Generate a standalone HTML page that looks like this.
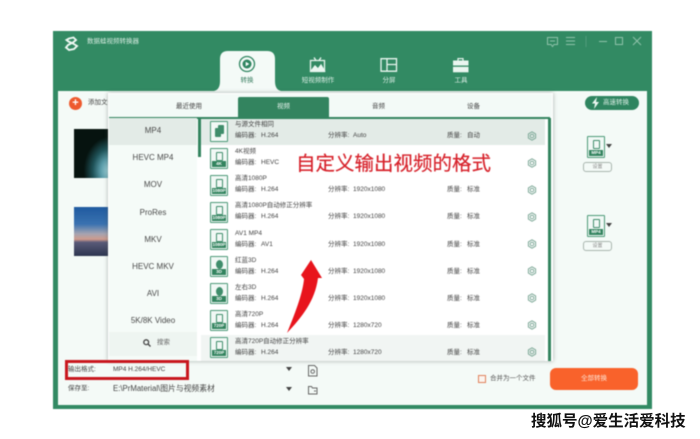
<!DOCTYPE html>
<html lang="zh"><head><meta charset="utf-8"><title>视频转换器</title>
<style>
*{box-sizing:border-box}
html,body{margin:0;padding:0;width:700px;height:439px;overflow:hidden;background:#fff;font-family:"Liberation Sans","Noto Sans CJK SC",sans-serif}
.a{position:absolute;white-space:nowrap}
#app{position:absolute;left:0;top:0;width:700px;height:439px;filter:blur(.4px)}
.fi{position:absolute;left:210px;width:18px;height:21px;border:1px solid #4c9a78;border-radius:1px;background:#f1f8f5}
.fi i{position:absolute;left:5px;top:2.500px;width:7px;height:9px;border:1px solid #3f8d6b;border-radius:1px}
.fi b{position:absolute;left:1px;right:1px;bottom:1px;height:6px;background:#33845f;color:#fff;font:bold 4.500px/6px "Liberation Sans",sans-serif;text-align:center}
.li{position:absolute;left:109px;width:88px;text-align:center;font-size:8px;line-height:12px;color:#4a4a4a}
.lb{position:absolute;color:#444;font-size:6.500px;line-height:8px;white-space:nowrap;margin-top:1px}
</style></head><body>
<div id="app">
<div class="a" style="left:53px;top:31px;width:599px;height:378px;background:#328a63"></div>
<div class="a" style="left:58px;top:91px;width:589px;height:314px;background:#f4faf7"></div>

<svg class="a" style="left:64px;top:36px" width="15" height="15" viewBox="0 0 15 15" fill="none" stroke="#eef8f3" stroke-width="1.900"><path d="M5 2.500 9.500 1.500 12 4 9 6.500 4 9 2 11.500 5 14 10 13 13 10 9 7.500 4.500 5.500 2.500 4z"/></svg>
<div class="a" style="left:87px;top:37px;font-size:6.500px;line-height:9px;color:#d6ebe0">数据蛙视频转换器</div>

<!-- window controls -->
<svg class="a" style="left:545px;top:35px" width="100" height="14" fill="none" stroke="#8fc2aa" stroke-width="1"><path d="M2.500 2.500h10v7h-3.500l-1.500 2-1.500-2h-3.500zM5 6h5M21 2.500h9M21 6h9M21 9.500h9"/><path d="M41 1v11" stroke="#4f9c7b"/><path d="M54 6.500h8M70.500 2.500h7v7h-7zM88 2l8 8M96 2l-8 8"/></svg>

<!-- main tabs -->
<svg class="a" style="left:214px;top:51px" width="67" height="40"><path d="M0 40C4 39 6 36 6 30V8Q6 0 14 0H53Q61 0 61 8V30C61 36 63 39 67 40z" fill="#f4faf7"/></svg>
<svg class="a" style="left:238px;top:55px" width="18" height="18" fill="none" stroke="#2f8560" stroke-width="1.300"><circle cx="9" cy="9" r="7.500"/><circle cx="9" cy="9" r="4.500" fill="#2f8560" stroke="none"/><path d="M7.700 6.800 11.300 9 7.700 11.200z" fill="#fff" stroke="none"/></svg>
<div class="a" style="left:237px;top:77px;width:20px;text-align:center;font-size:6.500px;line-height:8px;color:#3b7f62">转换</div>
<svg class="a" style="left:309px;top:57px" width="18" height="16" fill="none" stroke="#eaf6f0" stroke-width="1.300"><path d="M1.500 3.500h14v11h-14zM5 .5l2 3M12 .5l-2 3"/><path d="M2 14l4-5 3 3 3-4 3.500 6z" fill="#eaf6f0"/></svg>
<div class="a" style="left:297px;top:77px;width:42px;text-align:center;font-size:6.500px;line-height:8px;color:#dcefe6">短视频制作</div>
<svg class="a" style="left:380px;top:58px" width="18" height="14" fill="none" stroke="#eaf6f0" stroke-width="1.300"><path d="M1 .7h15.500v12.500h-15.500zM7 .7v12.500M7 6.500h9.500"/></svg>
<div class="a" style="left:379px;top:77px;width:20px;text-align:center;font-size:6.500px;line-height:8px;color:#dcefe6">分屏</div>
<svg class="a" style="left:452px;top:58px" width="18" height="15"><path d="M6 2.500v-2h5v2" fill="none" stroke="#eaf6f0" stroke-width="1.200"/><rect x="1" y="2.500" width="15.500" height="5" fill="#eaf6f0"/><rect x="1" y="8.800" width="15.500" height="5.500" fill="#eaf6f0"/></svg>
<div class="a" style="left:449px;top:77px;width:24px;text-align:center;font-size:6.500px;line-height:8px;color:#dcefe6">工具</div>

<!-- behind popup -->
<div class="a" style="left:69px;top:97px;width:13px;height:13px;border-radius:50%;background:#ee5a2e;color:#fff;font:bold 11px/12px 'Liberation Sans';text-align:center">+</div>
<div class="a" style="left:88px;top:99px;font-size:6.500px;line-height:8px;color:#444">添加文件</div>
<div class="a" style="left:74px;top:129px;width:34px;height:49px;background:radial-gradient(ellipse 26px 34px at 105% 85%,#a8d8df 0,#5a9ba8 35%,#1f5258 65%,rgba(6,20,18,0) 100%),#06130f"></div>
<div class="a" style="left:74px;top:207px;width:34px;height:49px;background:linear-gradient(#1f5aa0 0,#3a72b0 35%,#a7a4b0 55%,#cf9a8c 66%,#5a5a78 72%,#2c3550 100%)"></div>

<div class="a" style="left:585px;top:96px;width:54px;height:14px;border-radius:7px;background:#2f8560"></div>
<svg class="a" style="left:591px;top:97px" width="9" height="12"><path d="M6 0 1 6.500h3L3 12l5-7H5z" fill="#eef8f3"/></svg>
<div class="a" style="left:603px;top:99px;font-size:6.500px;line-height:8px;color:#d8ede3">高速转换</div>

<div class="fi" style="left:587px;top:136px;height:22px"><i></i><b>MP4</b></div>
<svg class="a" style="left:606px;top:144px" width="6" height="4"><path d="M0 0h6L3 4z" fill="#444"/></svg>
<div class="a" style="left:583px;top:162px;width:29px;height:10px;border:1px solid #a9b5ae;border-radius:3px;text-align:center;font-size:5px;line-height:8px;color:#888">设置</div>
<div class="fi" style="left:587px;top:215px;height:22px"><i></i><b>MP4</b></div>
<svg class="a" style="left:606px;top:223px" width="6" height="4"><path d="M0 0h6L3 4z" fill="#444"/></svg>
<div class="a" style="left:583px;top:241px;width:29px;height:10px;border:1px solid #a9b5ae;border-radius:3px;text-align:center;font-size:5px;line-height:8px;color:#888">设置</div>

<!-- popup -->
<div class="a" style="left:108px;top:93px;width:445px;height:268px;background:#fff;box-shadow:0 0 4px rgba(70,80,75,.45)"></div>
<div class="a" style="left:109px;top:94px;width:443px;height:23px;background:#f3faf7"></div>
<div class="a" style="left:238px;top:97px;width:91px;height:21px;background:#33845f;border-radius:2px 2px 0 0"></div>
<div class="a" style="left:109px;top:117px;width:441px;height:1.500px;background:#33845f"></div>
<div class="lb" style="left:176px;top:103px;margin:0">最近使用</div>
<div class="a" style="left:277px;top:103px;font-size:6.500px;line-height:8px;color:#e7f4ee">视频</div>
<div class="lb" style="left:372px;top:103px;margin:0">音频</div>
<div class="lb" style="left:467px;top:103px;margin:0">设备</div>

<div class="a" style="left:109px;top:118px;width:88px;height:243px;background:#f5fbf8"></div>
<div class="a" style="left:109px;top:118px;width:88px;height:27px;background:#e3ebe7"></div>
<div class="a" style="left:198px;top:118px;width:2.500px;height:39px;background:#33845f"></div>
<div class="a" style="left:548px;top:118px;width:2.500px;height:243px;background:#33845f"></div>
<div class="a" style="left:109px;top:332px;width:88px;height:24px;background:#eef5f1"></div>
<div class="li" style="top:125px">MP4</div>
<div class="li" style="top:152px">HEVC MP4</div>
<div class="li" style="top:179px">MOV</div>
<div class="li" style="top:207px">ProRes</div>
<div class="li" style="top:234px">MKV</div>
<div class="li" style="top:261px">HEVC MKV</div>
<div class="li" style="top:288px">AVI</div>
<div class="li" style="top:315px">5K/8K Video</div>
<svg class="a" style="left:143px;top:339px" width="8" height="8" fill="none" stroke="#444" stroke-width="1.300"><circle cx="3.200" cy="3.200" r="2.400"/><path d="M5 5l2.500 2.500"/></svg>
<div class="a" style="left:157px;top:339px;font-size:6.500px;line-height:8px;color:#666">搜索</div>

<div class="a" style="left:201px;top:119px;width:344px;height:26px;background:#e3ebe7"></div>
<div class="a" style="left:201px;top:335px;width:344px;height:26px;background:#f1f5f3"></div>

<!-- rows -->
<div class="fi" style="top:121px"><i style="left:7px;top:3px;width:6px;height:9px;background:#3f8d6b"></i><i style="left:4px;top:6px;width:6px;height:9px;background:#3f8d6b"></i></div>
<div class="lb" style="left:235px;top:120px">与源文件相同</div><div class="lb" style="left:235px;top:131px">编码器:</div><div class="lb" style="left:261px;top:131px">H.264</div><div class="lb" style="left:328px;top:131px">分辨率:</div><div class="lb" style="left:353px;top:131px">Auto</div><div class="lb" style="left:447px;top:131px">质量:</div><div class="lb" style="left:467px;top:131px">自动</div>

<div class="fi" style="top:148px"><i></i><b>4K</b></div>
<div class="lb" style="left:235px;top:147px">4K视频</div><div class="lb" style="left:235px;top:158px">编码器:</div><div class="lb" style="left:261px;top:158px">HEVC</div>

<div class="fi" style="top:175px"><i></i><b>1080P</b></div>
<div class="lb" style="left:235px;top:174px">高清1080P</div><div class="lb" style="left:235px;top:185px">编码器:</div><div class="lb" style="left:261px;top:185px">H.264</div><div class="lb" style="left:328px;top:185px">分辨率:</div><div class="lb" style="left:353px;top:185px">1920x1080</div><div class="lb" style="left:447px;top:185px">质量:</div><div class="lb" style="left:467px;top:185px">标准</div>

<div class="fi" style="top:202px"><i></i><b>1080P</b></div>
<div class="lb" style="left:235px;top:201px">高清1080P自动修正分辨率</div><div class="lb" style="left:235px;top:212px">编码器:</div><div class="lb" style="left:261px;top:212px">H.264</div><div class="lb" style="left:328px;top:212px">分辨率:</div><div class="lb" style="left:353px;top:212px">1920x1080</div><div class="lb" style="left:447px;top:212px">质量:</div><div class="lb" style="left:467px;top:212px">标准</div>

<div class="fi" style="top:229px"><i></i><b>1080P</b></div>
<div class="lb" style="left:235px;top:229px">AV1 MP4</div><div class="lb" style="left:235px;top:240px">编码器:</div><div class="lb" style="left:261px;top:240px">AV1</div><div class="lb" style="left:328px;top:240px">分辨率:</div><div class="lb" style="left:353px;top:240px">1920x1080</div><div class="lb" style="left:447px;top:240px">质量:</div><div class="lb" style="left:467px;top:240px">标准</div>

<div class="fi" style="top:256px"><i style="border-radius:50%;background:#3f8d6b"></i><b>3D</b></div>
<div class="lb" style="left:235px;top:256px">红蓝3D</div><div class="lb" style="left:235px;top:267px">编码器:</div><div class="lb" style="left:261px;top:267px">H.264</div><div class="lb" style="left:328px;top:267px">分辨率:</div><div class="lb" style="left:353px;top:267px">1920x1080</div><div class="lb" style="left:447px;top:267px">质量:</div><div class="lb" style="left:467px;top:267px">标准</div>

<div class="fi" style="top:283px"><i style="border-radius:50%;background:#3f8d6b"></i><b>3D</b></div>
<div class="lb" style="left:235px;top:283px">左右3D</div><div class="lb" style="left:235px;top:294px">编码器:</div><div class="lb" style="left:261px;top:294px">H.264</div><div class="lb" style="left:328px;top:294px">分辨率:</div><div class="lb" style="left:353px;top:294px">1920x1080</div><div class="lb" style="left:447px;top:294px">质量:</div><div class="lb" style="left:467px;top:294px">标准</div>

<div class="fi" style="top:310px"><i></i><b>720P</b></div>
<div class="lb" style="left:235px;top:310px">高清720P</div><div class="lb" style="left:235px;top:321px">编码器:</div><div class="lb" style="left:261px;top:321px">H.264</div><div class="lb" style="left:328px;top:321px">分辨率:</div><div class="lb" style="left:353px;top:321px">1280x720</div><div class="lb" style="left:447px;top:321px">质量:</div><div class="lb" style="left:467px;top:321px">标准</div>

<div class="fi" style="top:337px"><i></i><b>720P</b></div>
<div class="lb" style="left:235px;top:337px">高清720P自动修正分辨率</div><div class="lb" style="left:235px;top:348px">编码器:</div><div class="lb" style="left:261px;top:348px">H.264</div><div class="lb" style="left:328px;top:348px">分辨率:</div><div class="lb" style="left:353px;top:348px">1280x720</div><div class="lb" style="left:447px;top:348px">质量:</div><div class="lb" style="left:467px;top:348px">标准</div>

<!-- gears -->
<svg class="a" style="left:527px;top:130px" width="10" height="232" fill="none" stroke="#7da897" stroke-width="1">
<defs><g id="g"><circle cx="5" cy="6" r="1.800"/><path d="M5 1.800 8.600 3.900V8.100L5 10.200 1.400 8.100V3.900z" stroke-linejoin="round"/></g></defs>
<use href="#g"/><use href="#g" y="27"/><use href="#g" y="54"/><use href="#g" y="81"/><use href="#g" y="108"/><use href="#g" y="135"/><use href="#g" y="162"/><use href="#g" y="189"/><use href="#g" y="216"/></svg>

<!-- annotations -->
<div class="a" style="left:296px;top:152px;font-size:19.500px;line-height:25px;color:#d7222b;-webkit-text-stroke:.2px #d7222b">自定义输出视频的格式</div>
<svg class="a" style="left:280px;top:255px" width="50" height="85"><path d="M31 5 21 20 24 24C23 36 17 54 7 78 22 62 35 46 38 23L42 23z" fill="#e8141c"/></svg>

<!-- bottom bar -->
<div class="a" style="left:68px;top:366px;font-size:6.500px;line-height:8px;color:#444">输出格式:</div>
<div class="a" style="left:113px;top:366px;font-size:6.500px;line-height:8px;color:#444">MP4 H.264/HEVC</div>
<div class="a" style="left:65px;top:360px;width:124px;height:20px;border:3px solid #c8171e"></div>
<div class="a" style="left:68px;top:385px;font-size:6.500px;line-height:8px;color:#444">保存至:</div>
<div class="a" style="left:113px;top:384px;font-size:7.800px;line-height:10px;color:#444">E:\PrMaterial\图片与视频素材</div>
<svg class="a" style="left:286px;top:367px" width="6" height="4"><path d="M0 0h6L3 4z" fill="#444"/></svg>
<svg class="a" style="left:286px;top:387px" width="6" height="4"><path d="M0 0h6L3 4z" fill="#444"/></svg>
<svg class="a" style="left:307px;top:364px" width="11" height="32" fill="none" stroke="#666" stroke-width="1"><path d="M1.500 1.500h6l2.500 2.500v8h-8.500z"/><circle cx="5.700" cy="7.500" r="1.800"/><path d="M1.500 22.500h3l1 1.500h4.500v6h-8.500z"/><path d="M7 27h2"/></svg>
<div class="a" style="left:478px;top:375px;width:8px;height:8px;border:1px solid #e0825c;background:#fbf4ef"></div>
<div class="a" style="left:490px;top:375px;font-size:6.500px;line-height:8px;color:#555">合并为一个文件</div>
<div class="a" style="left:550px;top:368px;width:88px;height:22px;border-radius:6px;background:#f9622b;color:#fde3d2;font-size:6.500px;line-height:22px;text-align:center">全部转换</div>
</div>

<div class="a" style="left:531px;top:412px;font-size:15.500px;line-height:20px;font-weight:700;color:#111;text-shadow:0 0 1px #fff">搜狐号@爱生活爱科技</div>
</body></html>
